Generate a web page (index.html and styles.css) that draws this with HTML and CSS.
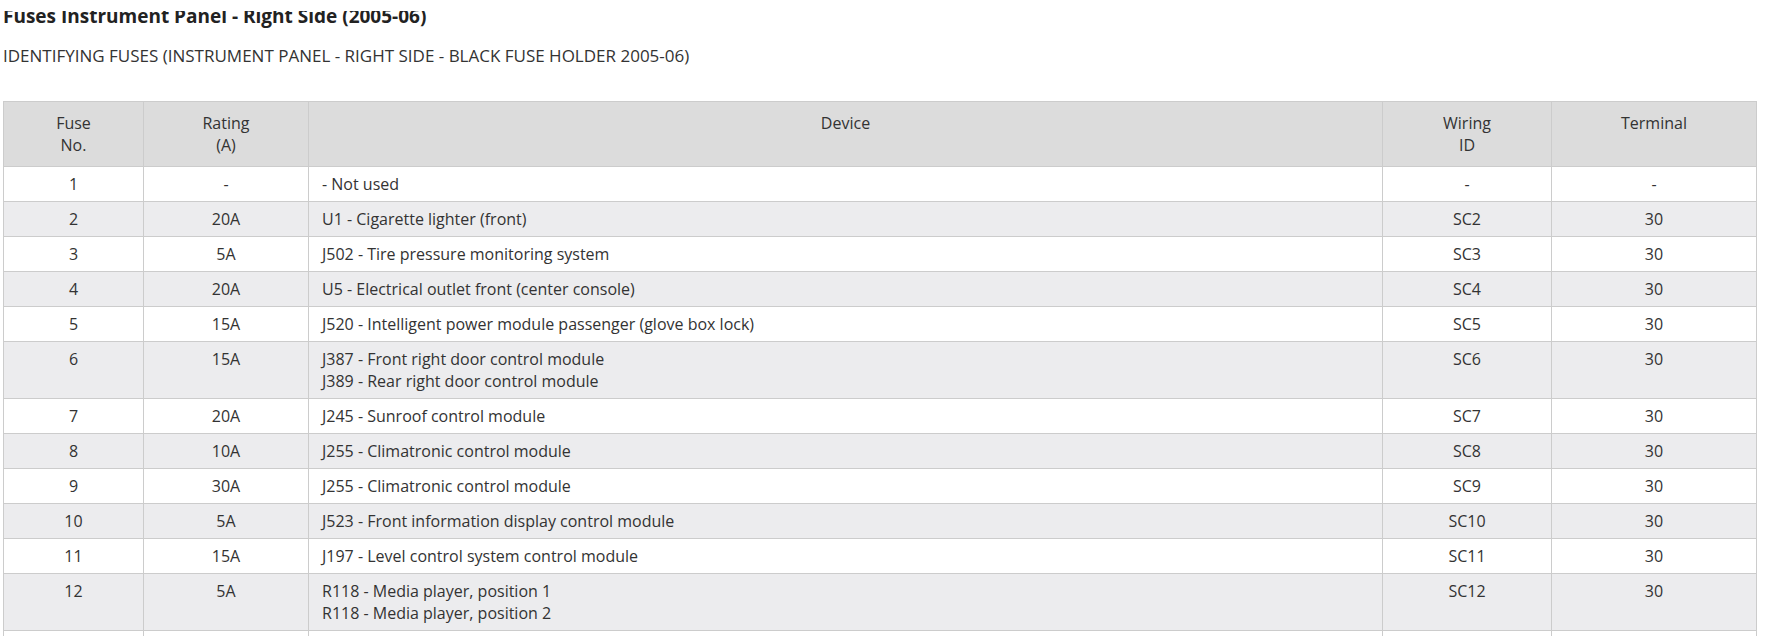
FILE: index.html
```html
<!DOCTYPE html>
<html lang="en">
<head>
<meta charset="utf-8">
<title>Fuses Instrument Panel - Right Side (2005-06)</title>
<link rel="stylesheet" href="styles.css">
</head>
<body>
<div class="topbar"></div>
<div class="page">
  <h2 class="title">Fuses Instrument Panel - Right Side (2005-06)</h2>
  <p class="subtitle">IDENTIFYING FUSES (INSTRUMENT PANEL - RIGHT SIDE - BLACK FUSE HOLDER 2005-06)</p>
  <table class="fuses">
    <colgroup>
      <col class="c-no"><col class="c-rating"><col class="c-device"><col class="c-wiring"><col class="c-terminal">
    </colgroup>
    <thead>
      <tr>
        <th>Fuse<br>No.</th>
        <th>Rating<br>(A)</th>
        <th>Device</th>
        <th>Wiring<br>ID</th>
        <th>Terminal</th>
      </tr>
    </thead>
    <tbody>
      <tr><td>1</td><td>-</td><td class="dev">- Not used</td><td>-</td><td>-</td></tr>
      <tr><td>2</td><td>20A</td><td class="dev">U1 - Cigarette lighter (front)</td><td>SC2</td><td>30</td></tr>
      <tr><td>3</td><td>5A</td><td class="dev">J502 - Tire pressure monitoring system</td><td>SC3</td><td>30</td></tr>
      <tr><td>4</td><td>20A</td><td class="dev">U5 - Electrical outlet front (center console)</td><td>SC4</td><td>30</td></tr>
      <tr><td>5</td><td>15A</td><td class="dev">J520 - Intelligent power module passenger (glove box lock)</td><td>SC5</td><td>30</td></tr>
      <tr><td>6</td><td>15A</td><td class="dev">J387 - Front right door control module<br>J389 - Rear right door control module</td><td>SC6</td><td>30</td></tr>
      <tr><td>7</td><td>20A</td><td class="dev">J245 - Sunroof control module</td><td>SC7</td><td>30</td></tr>
      <tr><td>8</td><td>10A</td><td class="dev">J255 - Climatronic control module</td><td>SC8</td><td>30</td></tr>
      <tr><td>9</td><td>30A</td><td class="dev">J255 - Climatronic control module</td><td>SC9</td><td>30</td></tr>
      <tr><td>10</td><td>5A</td><td class="dev">J523 - Front information display control module</td><td>SC10</td><td>30</td></tr>
      <tr><td>11</td><td>15A</td><td class="dev">J197 - Level control system control module</td><td>SC11</td><td>30</td></tr>
      <tr><td>12</td><td>5A</td><td class="dev">R118 - Media player, position 1<br>R118 - Media player, position 2</td><td>SC12</td><td>30</td></tr>
      <tr><td>&nbsp;</td><td>&nbsp;</td><td class="dev">&nbsp;</td><td>&nbsp;</td><td>&nbsp;</td></tr>
    </tbody>
  </table>
</div>
</body>
</html>
```

FILE: styles.css
```css
html, body {
  margin: 0;
  padding: 0;
  background: #ffffff;
}

body {
  font-family: "Open Sans", "Noto Sans", sans-serif;
  color: #333333;
  overflow: hidden;
}

/* bottom edge of the sticky site header, covering the heading's top */
.topbar {
  position: fixed;
  top: 0;
  left: 0;
  right: 0;
  height: 11px;
  background: #ffffff;
  z-index: 10;
}

.page {
  padding: 0 3px;
}

.title {
  margin: 0;
  padding-top: 4px;
  font-size: 19px;
  line-height: 24px;
  font-weight: 700;
  color: #222222;
}

.subtitle {
  margin: 16px 0 0;
  font-size: 17px;
  line-height: 23px;
  color: #333333;
}

.fuses {
  margin-top: 34px;
  width: 1753px;
  border-collapse: collapse;
  table-layout: fixed;
  font-size: 16px;
  line-height: 22px;
}

.c-no { width: 140px; }
.c-rating { width: 165px; }
.c-device { width: 1074px; }
.c-wiring { width: 169px; }
.c-terminal { width: 205px; }

.fuses th,
.fuses td {
  border: 1px solid #cccccc;
  text-align: center;
  vertical-align: top;
  color: #333333;
}

.fuses th {
  background: #dcdcdc;
  font-weight: 400;
  padding: 10px 12px 10px;
}

.fuses td {
  padding: 6px 12px 6px;
}

.fuses td.dev {
  text-align: left;
  padding-left: 13px;
}

.fuses tbody tr:nth-child(even) td {
  background: #ececee;
}

.fuses tbody tr:nth-child(odd) td {
  background: #ffffff;
}
```
